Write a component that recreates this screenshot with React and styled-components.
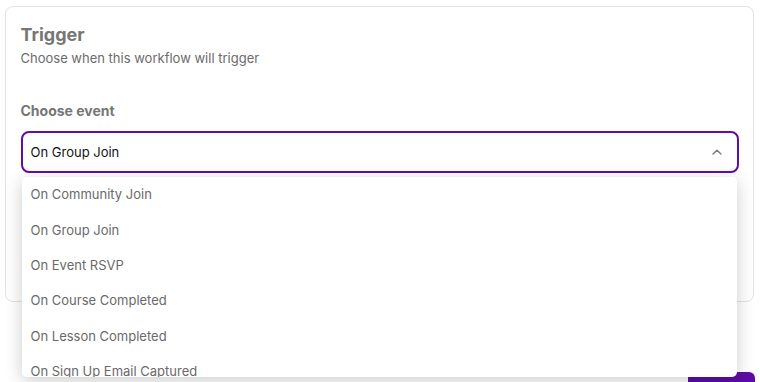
import React from "react";
import styled, { createGlobalStyle } from "styled-components";

const Global = createGlobalStyle`
  html, body { margin: 0; padding: 0; background: #ffffff; }
  body { font-family: Inter, "Noto Sans", Arial, sans-serif; overflow: hidden; }
  * { box-sizing: border-box; }
`;

const Page = styled.div`
  padding: 6px 5px 0 5px;
  width: 760px;
  height: 382px;
  overflow: hidden;
`;

const Card = styled.section`
  width: 749px;
  border: 1.5px solid #e3e3e3;
  border-radius: 8px;
  background: #fff;
  padding: 17px 14.5px 128.5px 14.5px;
`;

const Title = styled.h2`
  margin: 0;
  font-size: 18px;
  line-height: 22px;
  font-weight: 700;
  color: #767676;
`;

const Subtitle = styled.p`
  margin: 3px 0 0;
  font-size: 13px;
  line-height: 18px;
  color: #6b6b6b;
`;

const Label = styled.div`
  margin-top: 34px;
  font-size: 14px;
  line-height: 20px;
  font-weight: 700;
  color: #767676;
`;

const SelectWrap = styled.div`
  position: relative;
  margin-top: 9.5px;
`;

const SelectBox = styled.div`
  height: 42px;
  border: 2px solid #5f0ea8;
  border-radius: 8px;
  display: flex;
  align-items: center;
  justify-content: space-between;
  padding: 0 15px 0 8px;
  font-size: 13px;
  color: #141414;
`;

const Menu = styled.ul`
  position: absolute;
  top: 46px;
  left: 1px;
  right: 2px;
  height: 200px;
  margin: 0;
  padding: 0 0 8px;
  list-style: none;
  background: #fff;
  border-radius: 5px;
  box-shadow: 0 4px 18px rgba(0, 0, 0, 0.2);
  overflow-y: scroll;
  z-index: 10;
  &::-webkit-scrollbar { width: 4px; }
  &::-webkit-scrollbar-track { background: #efefef; }
  &::-webkit-scrollbar-thumb { background: #bdbdbd; }
`;

const Item = styled.li`
  padding: 0 9px;
  height: 35.4px;
  display: flex;
  align-items: center;
  font-size: 13px;
  color: #6a6a6a;
`;

const Footer = styled.div`
  margin-top: 70px;
  display: flex;
  justify-content: flex-end;
  width: 750px;
`;

const Button = styled.button`
  width: 67px;
  height: 48px;
  border: none;
  border-radius: 6px;
  background: #5e0ca4;
  color: #fff;
  font-family: inherit;
  font-size: 13px;
`;

const events = [
  "On Community Join",
  "On Group Join",
  "On Event RSVP",
  "On Course Completed",
  "On Lesson Completed",
  "On Sign Up Email Captured",
];

export default function App() {
  return (
    <>
      <Global />
      <Page>
        <Card>
          <Title>Trigger</Title>
          <Subtitle>Choose when this workflow will trigger</Subtitle>
          <Label>Choose event</Label>
          <SelectWrap>
            <SelectBox>
              <span>On Group Join</span>
              <svg width="10" height="6" viewBox="0 0 10 6" fill="none">
                <path d="M1 5L5 1.2L9 5" stroke="#7a7a7a" strokeWidth="1.4" strokeLinecap="round" strokeLinejoin="round" />
              </svg>
            </SelectBox>
            <Menu>
              {events.map((e) => (
                <Item key={e}>{e}</Item>
              ))}
            </Menu>
          </SelectWrap>
        </Card>
        <Footer>
          <Button>Save</Button>
        </Footer>
      </Page>
    </>
  );
}
